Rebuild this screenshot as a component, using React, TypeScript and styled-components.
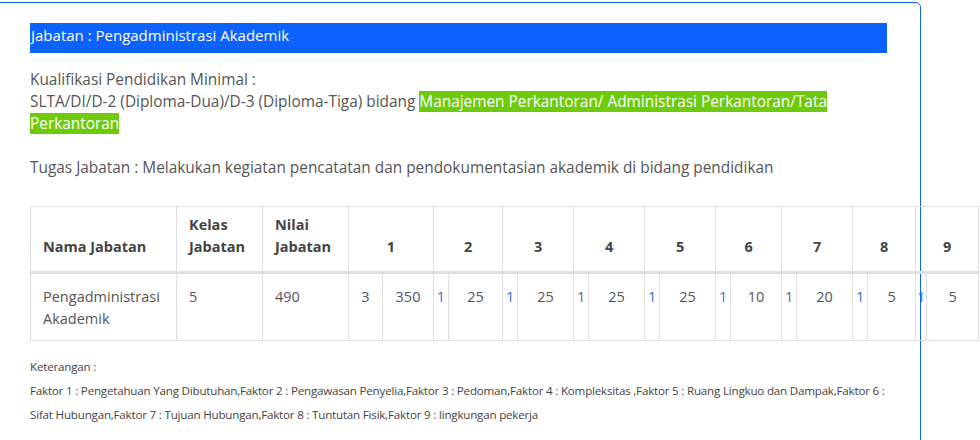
import React from "react";
import styled, { createGlobalStyle } from "styled-components";

const Global = createGlobalStyle`
  html, body { margin: 0; background: #fff; overflow: hidden; height: 440px; }
  body { font-family: "Open Sans", "Liberation Sans", sans-serif; color: #555; }
`;

const Card = styled.div`
  margin: 2px 0 0 -10px;
  width: 931px;
  height: 460px;
  border: 1px solid #0d62fe;
  border-radius: 5px;
  box-sizing: border-box;
  padding: 20px 0 0 39px;
`;

const Inner = styled.div`
  width: 857px;
`;

const Title = styled.div`
  background: #0d62fe;
  color: #fff;
  font-size: 15px;
  height: 30px;
  line-height: 24px;
  padding-left: 1px;
`;

const Para = styled.p<{ $mt: number }>`
  margin: ${(p) => p.$mt}px 0 0;
  font-size: 15.4px;
  line-height: 22px;
`;

const Hl = styled.span`
  background: #6ecb0b;
  color: #fff;
`;

const Table = styled.table`
  margin-top: 27px;
  width: 948px;
  table-layout: fixed;
  border-collapse: collapse;
  font-size: 14.5px;
`;

const Th = styled.th<{ $left?: boolean }>`
  border: 1px solid #dcdfe3;
  border-bottom: 3px solid #dcdfe3;
  height: 66px;
  box-sizing: border-box;
  color: #444;
  font-weight: 700;
  text-align: ${(p) => (p.$left ? "left" : "center")};
  padding: 0 12px 13px;
  line-height: 22px;
  vertical-align: bottom;
`;

const Td = styled.td<{ $left?: boolean; $blue?: boolean }>`
  border: 1px solid #dcdfe3;
  height: 68px;
  box-sizing: border-box;
  text-align: ${(p) => (p.$left ? "left" : "center")};
  vertical-align: top;
  padding: 12px ${(p) => (p.$left ? "12px" : "0")} 0;
  line-height: 22px;
  color: ${(p) => (p.$blue ? "#3a6ec6" : "#555")};
`;

const Note = styled.div`
  margin-top: 14px;
  font-size: 11.6px;
  line-height: 24px;
  color: #444;
  letter-spacing: -0.2px;
`;

const sub = [
  [34, 51], [15, 54], [15, 56], [15, 56], [15, 56], [15, 51], [15, 56], [15, 48], [11, 52],
];
const vals = [
  ["3", "350"], ["1", "25"], ["1", "25"], ["1", "25"], ["1", "25"], ["1", "10"], ["1", "20"], ["1", "5"], ["1", "5"],
];

export default function App() {
  return (
    <>
      <Global />
      <Card>
        <Inner>
          <Title>Jabatan : Pengadministrasi Akademik</Title>
          <Para $mt={16}>
            Kualifikasi Pendidikan Minimal :<br />
            SLTA/DI/D-2 (Diploma-Dua)/D-3 (Diploma-Tiga) bidang{" "}
            <Hl>Manajemen Perkantoran/ Administrasi Perkantoran/Tata Perkantoran</Hl>
          </Para>
          <Para $mt={22}>
            Tugas Jabatan : Melakukan kegiatan pencatatan dan pendokumentasian akademik di bidang pendidikan
          </Para>
          <Table>
            <colgroup>
              <col style={{ width: 146 }} />
              <col style={{ width: 86 }} />
              <col style={{ width: 86 }} />
              {sub.flatMap(([a, b], i) => [
                <col key={i + "a"} style={{ width: a }} />,
                <col key={i + "b"} style={{ width: b }} />,
              ])}
            </colgroup>
            <thead>
              <tr>
                <Th $left>Nama Jabatan</Th>
                <Th $left>Kelas Jabatan</Th>
                <Th $left>Nilai Jabatan</Th>
                {sub.map((_, i) => (
                  <Th key={i} colSpan={2}>{i + 1}</Th>
                ))}
              </tr>
            </thead>
            <tbody>
              <tr>
                <Td $left>Pengadministrasi Akademik</Td>
                <Td $left>5</Td>
                <Td $left>490</Td>
                {vals.flatMap(([a, b], i) => [
                  <Td key={i + "a"} $blue={i > 0}>{a}</Td>,
                  <Td key={i + "b"}>{b}</Td>,
                ])}
              </tr>
            </tbody>
          </Table>
          <Note>
            Keterangan :<br />
            Faktor 1 : Pengetahuan Yang Dibutuhan,Faktor 2 : Pengawasan Penyelia,Faktor 3 : Pedoman,Faktor 4 : Kompleksitas ,Faktor 5 : Ruang Lingkuo dan Dampak,Faktor 6 : Sifat Hubungan,Faktor 7 : Tujuan Hubungan,Faktor 8 : Tuntutan Fisik,Faktor 9 : lingkungan pekerja
          </Note>
        </Inner>
      </Card>
    </>
  );
}
